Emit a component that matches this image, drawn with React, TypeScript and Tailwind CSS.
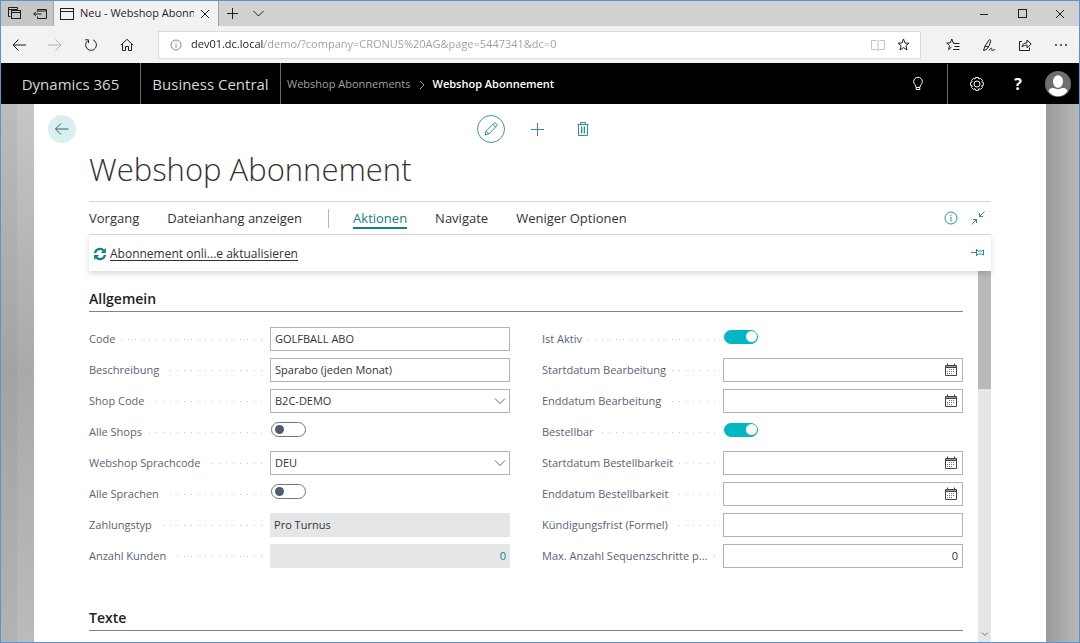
import React, { useId } from "react";

type IconProps = { className?: string; size?: number; sw?: number; box?: number; children: React.ReactNode };

function Icon({ className = "", size = 16, sw = 1, box = 16, children }: IconProps) {
  return (
    <svg
      aria-hidden="true"
      width={size}
      height={size}
      viewBox={`0 0 ${box} ${box}`}
      fill="none"
      stroke="currentColor"
      strokeWidth={sw}
      className={`shrink-0 ${className}`}
    >
      {children}
    </svg>
  );
}

function IconButton({ label, className = "", children }: { label: string; className?: string; children: React.ReactNode }) {
  return (
    <button type="button" aria-label={label} className={`flex shrink-0 items-center justify-center ${className}`}>
      {children}
    </button>
  );
}

const StarPath = "M6.5 1 L8 5 L12 5.2 L8.9 7.8 L10 12 L6.5 9.6 L3 12 L4.1 7.8 L1 5.2 L5 5 Z";

function TabStrip() {
  return (
    <div className="flex h-[25px] shrink-0 bg-[#d1d1d1] text-[#1f1f1f]">
      <div className="flex w-[52px] items-center justify-between bg-[#c6c6c6] pl-[7px] pr-[6px]">
        <IconButton label="Beiseitegelegte Tabs">
          <Icon size={13} box={13}>
            <path d="M2.5 9.5h-2v-9h9v2M.5 2.5h9" />
            <rect x="3.5" y="3.5" width="9" height="8" />
            <path d="M3.5 5.5h9" />
          </Icon>
        </IconButton>
        <IconButton label="Tabs beiseitelegen">
          <Icon size={14} box={14}>
            <path d="M4.5 4.5v-2h9v9h-9v-2M4.5 4h9M.5 7h8M3 4.8.8 7 3 9.2" />
          </Icon>
        </IconButton>
      </div>
      <div className="flex w-[165px] items-center border-l border-[#a9a9a9] bg-[#f2f2f2] pl-[6px] pr-2">
        <Icon size={14} box={14}>
          <rect x=".5" y="1.5" width="13" height="11" />
          <path d="M.5 4.5h13" />
        </Icon>
        <span className="ml-[6px] min-w-0 flex-1 overflow-hidden whitespace-nowrap text-[11px]">Neu - Webshop Abonnement</span>
        <IconButton label="Tab schließen" className="ml-[6px]">
          <Icon size={10} box={10}>
            <path d="M1 1l8 8M9 1 1 9" />
          </Icon>
        </IconButton>
      </div>
      <IconButton label="Neuer Tab" className="w-7 border-l border-[#9b9b9b]">
        <Icon size={11} box={11}>
          <path d="M5.5 0v11M0 5.5h11" />
        </Icon>
      </IconButton>
      <IconButton label="Tabvorschau" className="w-6">
        <Icon size={11} box={11}>
          <path d="M.5 3l5 5 5-5" />
        </Icon>
      </IconButton>
      <div className="ml-auto flex">
        <IconButton label="Minimieren" className="w-[38px]">
          <Icon size={10} box={10}>
            <path d="M1 5.5h8" />
          </Icon>
        </IconButton>
        <IconButton label="Maximieren" className="w-[38px]">
          <Icon size={9} box={9}>
            <rect x=".5" y=".5" width="8" height="8" />
          </Icon>
        </IconButton>
        <IconButton label="Schließen" className="w-[38px]">
          <Icon size={10} box={10}>
            <path d="M1 1l8 8M9 1 1 9" />
          </Icon>
        </IconButton>
      </div>
    </div>
  );
}

function AddressBar() {
  return (
    <div className="flex h-[37px] shrink-0 items-center bg-[#f2f2f2] pl-[10px] text-[#1f1f1f]">
      <div className="flex gap-5">
        <IconButton label="Zurück" className="w-4">
          <Icon>
            <path d="M2 8h13M7.500 2.500 2 8l5.500 5.500" />
          </Icon>
        </IconButton>
        <IconButton label="Vorwärts" className="w-4 text-[#b4b4b4]">
          <Icon>
            <path d="M1 8h13M8.500 2.500 14 8l-5.500 5.500" />
          </Icon>
        </IconButton>
        <IconButton label="Aktualisieren" className="w-4">
          <Icon>
            <path d="M10.200 3A5.400 5.400 0 1 1 5 3.500M2.200 2.800h3.300v3.300" />
          </Icon>
        </IconButton>
        <IconButton label="Startseite" className="w-4">
          <Icon>
            <path d="M1.800 8.200 8 2.300l6.200 5.900M3.500 7v6.500h3v-4h3v4h3V7" />
          </Icon>
        </IconButton>
      </div>
      <div className="ml-[23px] flex h-7 min-w-0 flex-1 items-center border border-[#dadada] bg-white pl-[11px] pr-[10px]">
        <Icon size={12} box={12} className="text-[#8a8a8a]">
          <circle cx="6" cy="6" r="5" />
          <path d="M6 5.300v3.500M6 3.300v1" />
        </Icon>
        <input
          aria-label="Adresse"
          defaultValue="dev01.dc.local/demo/?company=CRONUS%20AG&page=5447341&dc=0"
          className="ml-[9px] min-w-0 flex-1 bg-[linear-gradient(90deg,#1c1c1c_73px,#9c9c9c_73px)] bg-clip-text text-[11px] text-transparent outline-none"
        />
        <IconButton label="Leseansicht" className="mr-3 text-[#c4c4c4]">
          <Icon size={14} box={14}>
            <path d="M.5 2.500h5L7 3.500l1.500-1h5v9h-5L7 12.500l-1.500-1h-5zM7 3.500v9" />
          </Icon>
        </IconButton>
        <IconButton label="Zu Favoriten hinzufügen">
          <Icon size={13} box={13}>
            <path d={StarPath} />
          </Icon>
        </IconButton>
      </div>
      <div className="ml-[14px] flex">
        <IconButton label="Favoriten" className="w-9">
          <Icon size={14} box={14}>
            <path d="M8.500 5 7.200 4.800 5.800 1 4.300 4.800.8 5l2.700 2.500-.9 4 2.900-2.300M7.500 5.500h6M8.500 8.500h5M7 11.500h6.500" />
          </Icon>
        </IconButton>
        <IconButton label="Notizen hinzufügen" className="w-9">
          <Icon size={14} box={14}>
            <path d="M1.500 12.500 3 8l4.500-6.500 1.300.9L7.500 7l-3 4.500zM3 8l3.500 1M7 12.500c1-1.800 2.200-3 2.800-2 .4.900-.8 2 .4 2 1 0 1.300-1 3-.7" />
          </Icon>
        </IconButton>
        <IconButton label="Freigeben" className="w-9">
          <Icon size={14} box={14}>
            <path d="M4 3.500H1.500v9h10V9.500M4 9c.5-3 2.200-4.200 5-4.200V2l4.200 4L9 9.800V7.200C7 7 5.500 7.500 4 9z" />
          </Icon>
        </IconButton>
        <IconButton label="Einstellungen und mehr" className="w-9">
          <Icon size={14} box={14}>
            <g fill="currentColor" stroke="none">
              <circle cx="2" cy="7" r=".9" />
              <circle cx="7" cy="7" r=".9" />
              <circle cx="12" cy="7" r=".9" />
            </g>
          </Icon>
        </IconButton>
      </div>
    </div>
  );
}

function AppHeader() {
  return (
    <header className="flex h-[41px] shrink-0 items-stretch bg-black text-[#d6d6d6]">
      <a href="#dynamics" className="flex w-[139px] items-center justify-center whitespace-nowrap pt-px text-[15px]">Dynamics 365</a>
      <a href="#central" className="flex w-[140px] items-center justify-center whitespace-nowrap border-l border-[#6b6b6b] pt-px text-[15px]">Business Central</a>
      <nav aria-label="Brotkrumen" className="flex items-center border-l border-[#6b6b6b] pl-[6px] pt-[2px] text-[11px]">
        <a href="#liste" className="text-[#a0a0a0]">Webshop Abonnements</a>
        <Icon size={8} box={8} className="mx-[7px] text-[#a0a0a0]">
          <path d="M2 0l4 4-4 4" />
        </Icon>
        <span className="font-semibold text-white">Webshop Abonnement</span>
      </nav>
      <div className="ml-auto flex pt-px text-white">
        <IconButton label="Wie möchten Sie weiter verfahren?" className="w-[59px]">
          <Icon>
            <path d="M6.200 11.500C6.200 9 3.700 8.500 3.700 5.600a4.300 4.300 0 0 1 8.600 0c0 2.900-2.500 3.400-2.500 5.900zM6.200 11.500v2h3.600v-2" />
          </Icon>
        </IconButton>
        <IconButton label="Einstellungen" className="w-[58px] border-l border-[#6b6b6b]">
          <Icon>
            <circle cx="8" cy="8" r="3" />
            <path d="M6.600 1.500h2.800l.5 1.500 1.600-.7 2 2-.8 1.500 1.600.6v2.900l-1.600.5.8 1.600-2 2-1.600-.8-.5 1.700H6.600L6 12.600l-1.500.8-2-2 .8-1.600-1.700-.5V6.400l1.700-.6-.8-1.500 2-2L6 3z" />
          </Icon>
        </IconButton>
        <IconButton label="Hilfe" className="w-[26px] text-base font-bold">?</IconButton>
        <IconButton label="Konto" className="w-12 pl-[6px]">
          <svg aria-hidden="true" width="26" height="26" viewBox="0 0 26 26">
            <circle cx="13" cy="13" r="13" fill="#6e6e6e" />
            <ellipse cx="13" cy="10.500" rx="5" ry="6.300" fill="#fff" />
            <path d="M3.500 20c.5-2.500 3-3 5.500-3 1.800 1.500 6.200 1.500 8 0 2.500 0 5 .5 5.500 3-4.500 7-14.500 7-19 0z" fill="#fff" />
          </svg>
        </IconButton>
      </div>
    </header>
  );
}

function PageTools() {
  return (
    <div className="flex h-[50px] shrink-0 items-center pl-[14px]">
      <IconButton label="Zurück" className="h-7 w-7 rounded-full bg-[#d8f0f0] text-[#4a5a60]">
        <Icon>
          <path d="M1.500 8h13M7 2.500 1.500 8 7 13.500" />
        </Icon>
      </IconButton>
      <div className="flex flex-1 items-center justify-center gap-[17px] pr-12 text-[#2a9096]">
        <IconButton label="Bearbeiten" className="h-7 w-7 rounded-full border border-[#3a9a9f]">
          <Icon>
            <path d="M2 14l1-3.800 8.200-8.200c.9-.9 3.600 1.400 2.700 2.700L5.800 13zM3 10.200 5.800 13M10 3.500l2.700 2.700" />
          </Icon>
        </IconButton>
        <IconButton label="Neu" className="h-7 w-[30px]">
          <Icon size={13} box={13}>
            <path d="M6.500 0v13M0 6.500h13" />
          </Icon>
        </IconButton>
        <IconButton label="Löschen" className="h-7 w-7">
          <Icon size={14} box={14}>
            <path d="M1.500 2.500h11M4.500 2.500v-2h5v2M2.500 2.500v11h9v-11M5.500 4.500v7M8.500 4.500v7" />
            <path d="M7 4.500v7" strokeOpacity=".6" />
          </Icon>
        </IconButton>
      </div>
    </div>
  );
}

function ActionBar() {
  return (
    <>
      <div className="flex h-[34px] shrink-0 items-center border-y border-[#d5d7dc] text-[13px] text-[#333]">
        <div className="flex flex-1 items-center pt-[2px]">
          <button type="button">Vorgang</button>
          <button type="button" className="ml-7">Dateianhang anzeigen</button>
          <span className="mb-[2px] ml-[26px] h-[19px] w-px bg-[#b5b5b5]" />
          <button type="button" className="ml-6 mt-px border-b-2 border-[#128087] leading-[17px] text-[#128087]">Aktionen</button>
          <button type="button" className="ml-7">Navigate</button>
          <button type="button" className="ml-7">Weniger Optionen</button>
        </div>
        <div className="flex gap-[13px] pr-[6px] text-[#2a9096]">
          <IconButton label="Infobox">
            <Icon size={14} box={14}>
              <circle cx="7" cy="7" r="6" />
              <path d="M7 6v4.500M7 3.500v1.300" />
            </Icon>
          </IconButton>
          <IconButton label="Verkleinern">
            <Icon size={14} box={14}>
              <path d="M13.500.5 8.500 5.500M8.500 2v3.500H12M.5 13.500l5-5M2 8.500h3.500V12" />
            </Icon>
          </IconButton>
        </div>
      </div>
      <div className="z-10 flex h-9 shrink-0 items-center bg-white pl-1 pr-[6px] text-[#333] shadow-[0_3px_6px_rgba(0,0,0,0.14)]">
        <button type="button" className="flex items-center gap-[3px] pt-px text-xs">
          <svg aria-hidden="true" width="14" height="14" viewBox="0 0 14 14" fill="none" stroke="#128087" strokeWidth="2.200">
            <path d="M2 6.200a5 5 0 0 1 8.800-2.400M12 7.800a5 5 0 0 1-8.800 2.400" />
            <path d="M12.900 1v5H7.900zM1.100 13V8h5z" fill="#128087" stroke="none" />
          </svg>
          <span className="underline underline-offset-2">Abonnement onli...e aktualisieren</span>
        </button>
        <IconButton label="Anheften" className="ml-auto text-[#2a9096]">
          <Icon size={14} box={14}>
            <path d="M0 6.500h5M5.500 3v7M5.500 4l2 1h3l2-1v5l-2-1h-3l-2 1" />
          </Icon>
        </IconButton>
      </div>
    </>
  );
}

type FieldKind = "text" | "select" | "toggle" | "date" | "readonly" | "number" | "count";
type FieldDef = { label: string; kind: FieldKind; value?: string; on?: boolean };

const leftFields: FieldDef[] = [
  { label: "Code", kind: "text", value: "GOLFBALL ABO" },
  { label: "Beschreibung", kind: "text", value: "Sparabo (jeden Monat)" },
  { label: "Shop Code", kind: "select", value: "B2C-DEMO" },
  { label: "Alle Shops", kind: "toggle" },
  { label: "Webshop Sprachcode", kind: "select", value: "DEU" },
  { label: "Alle Sprachen", kind: "toggle" },
  { label: "Zahlungstyp", kind: "readonly", value: "Pro Turnus" },
  { label: "Anzahl Kunden", kind: "count", value: "0" },
];

const rightFields: FieldDef[] = [
  { label: "Ist Aktiv", kind: "toggle", on: true },
  { label: "Startdatum Bearbeitung", kind: "date" },
  { label: "Enddatum Bearbeitung", kind: "date" },
  { label: "Bestellbar", kind: "toggle", on: true },
  { label: "Startdatum Bestellbarkeit", kind: "date" },
  { label: "Enddatum Bestellbarkeit", kind: "date" },
  { label: "Kündigungsfrist (Formel)", kind: "text" },
  { label: "Max. Anzahl Sequenzschritte p...", kind: "number", value: "0" },
];

const baseClass = "h-6 w-full appearance-none rounded-none px-1 outline-none";
const boxClass = `${baseClass} border border-[#b3b3b3] bg-white text-[#333]`;

function Control({ id, field }: { id: string; field: FieldDef }) {
  switch (field.kind) {
    case "toggle":
      return (
        <input
          id={id}
          type="checkbox"
          role="switch"
          defaultChecked={field.on}
          className="mb-[5px] ml-px flex h-[15px] w-[35px] appearance-none items-center rounded-full border border-[#6b7589] bg-white px-[3px] before:h-[9px] before:w-[9px] before:rounded-full before:bg-[#505c6d] checked:h-[14px] checked:w-[34px] checked:justify-end checked:border-[#00b7c3] checked:bg-[#00b7c3] checked:px-0 checked:before:h-[11px] checked:before:w-[11px] checked:before:bg-white"
        />
      );
    case "select":
      return (
        <div className="relative w-full">
          <select id={id} defaultValue={field.value} className={boxClass}>
            <option>{field.value}</option>
          </select>
          <Icon size={12} box={12} className="pointer-events-none absolute right-1 top-[6px] text-[#666]">
            <path d="M1 3.500l5 5 5-5" />
          </Icon>
        </div>
      );
    case "date":
      return (
        <div className="relative w-full">
          <input id={id} type="text" className={boxClass} />
          <button type="button" aria-label="Datum auswählen" className="absolute right-[5px] top-[5px] text-[#444]">
            <Icon size={14} box={14}>
              <path d="M2 3.500h10" stroke="#999" strokeWidth="2" />
              <path d="M1.500 2.500h11v10h-11zM1.500 4.500h11M3.500.5v2M10.500.5v2" />
              <path d="M5 6.500h6M3 8.500h8M3 10.500h6" stroke="#777" strokeDasharray="1 1" />
            </Icon>
          </button>
        </div>
      );
    case "readonly":
      return <input id={id} readOnly defaultValue={field.value} className={`${baseClass} bg-[#e5e6e7] pb-[2px] text-[#333]`} />;
    case "count":
      return <input id={id} readOnly defaultValue={field.value} className={`${baseClass} bg-[#e5e6e7] pb-[2px] text-right text-[#128087]`} />;
    case "number":
      return <input id={id} type="text" inputMode="numeric" defaultValue={field.value} className={`${boxClass} pb-[2px] text-right`} />;
    default:
      return <input id={id} type="text" defaultValue={field.value} className={`${boxClass} pb-[2px]`} />;
  }
}

function FieldRow({ field }: { field: FieldDef }) {
  const id = useId();
  return (
    <div className="flex h-6 items-center">
      <div className="flex w-[43%] shrink-0 items-center pr-2">
        <label htmlFor={id} className="mr-[6px] whitespace-nowrap text-[#5a6377]">{field.label}</label>
        <span className="h-px min-w-0 flex-1 bg-[repeating-linear-gradient(to_left,#c3c6cc_0_1px,transparent_1px_7px)]" />
      </div>
      <div className="flex min-w-0 flex-1 items-center">
        <Control id={id} field={field} />
      </div>
    </div>
  );
}

function FieldColumn({ fields }: { fields: FieldDef[] }) {
  return (
    <div className="flex min-w-0 flex-col gap-[7px]">
      {fields.map((f) => (
        <FieldRow key={f.label} field={f} />
      ))}
    </div>
  );
}

function SectionTitle({ children }: { children: React.ReactNode }) {
  return <h2 className="border-b border-[#7d8492] pb-1 text-sm font-semibold leading-4 text-[#222]">{children}</h2>;
}

export default function App() {
  return (
    <div className="flex h-screen flex-col overflow-hidden border border-[#5a94d4] bg-white font-['Open_Sans','Noto_Sans',sans-serif]">
      <TabStrip />
      <AddressBar />
      <AppHeader />
      <div className="flex min-h-0 flex-1">
        <div className="w-4 shrink-0 bg-linear-to-b from-[#bcbcbc] via-[#a3a3a3] to-[#b2b2b2]" />
        <div className="w-[17px] shrink-0 bg-linear-to-b from-[#c6c6c6] via-[#a9a9a9] to-[#bbb]" />
        <main className="flex min-w-0 flex-1 flex-col bg-white">
          <PageTools />
          <div className="flex min-h-0 flex-1 flex-col px-[55px]">
            <h1 className="mb-[17px] shrink-0 text-[31px] font-light leading-[30px] text-[#333]">Webshop Abonnement</h1>
            <ActionBar />
            <div className="flex min-h-0 flex-1">
              <form className="flex min-w-0 flex-1 flex-col overflow-hidden pr-[15px] pt-5 text-[11px]">
                <SectionTitle>Allgemein</SectionTitle>
                <div className="mb-[42px] mt-[15px] grid grid-cols-2 gap-x-8">
                  <FieldColumn fields={leftFields} />
                  <FieldColumn fields={rightFields} />
                </div>
                <SectionTitle>Texte</SectionTitle>
              </form>
              <div className="flex w-[13px] shrink-0 flex-col items-center justify-between bg-[#e6e6e6] pb-1">
                <div className="h-[118px] w-full bg-[#b9b9b9]" />
                <Icon size={8} box={8} className="text-[#777]">
                  <path d="M1 2.500l3 3 3-3" />
                </Icon>
              </div>
            </div>
          </div>
        </main>
        <div className="w-[33px] shrink-0 bg-linear-to-r from-[#9b9b9b] to-[#b8b8b8]" />
      </div>
    </div>
  );
}
